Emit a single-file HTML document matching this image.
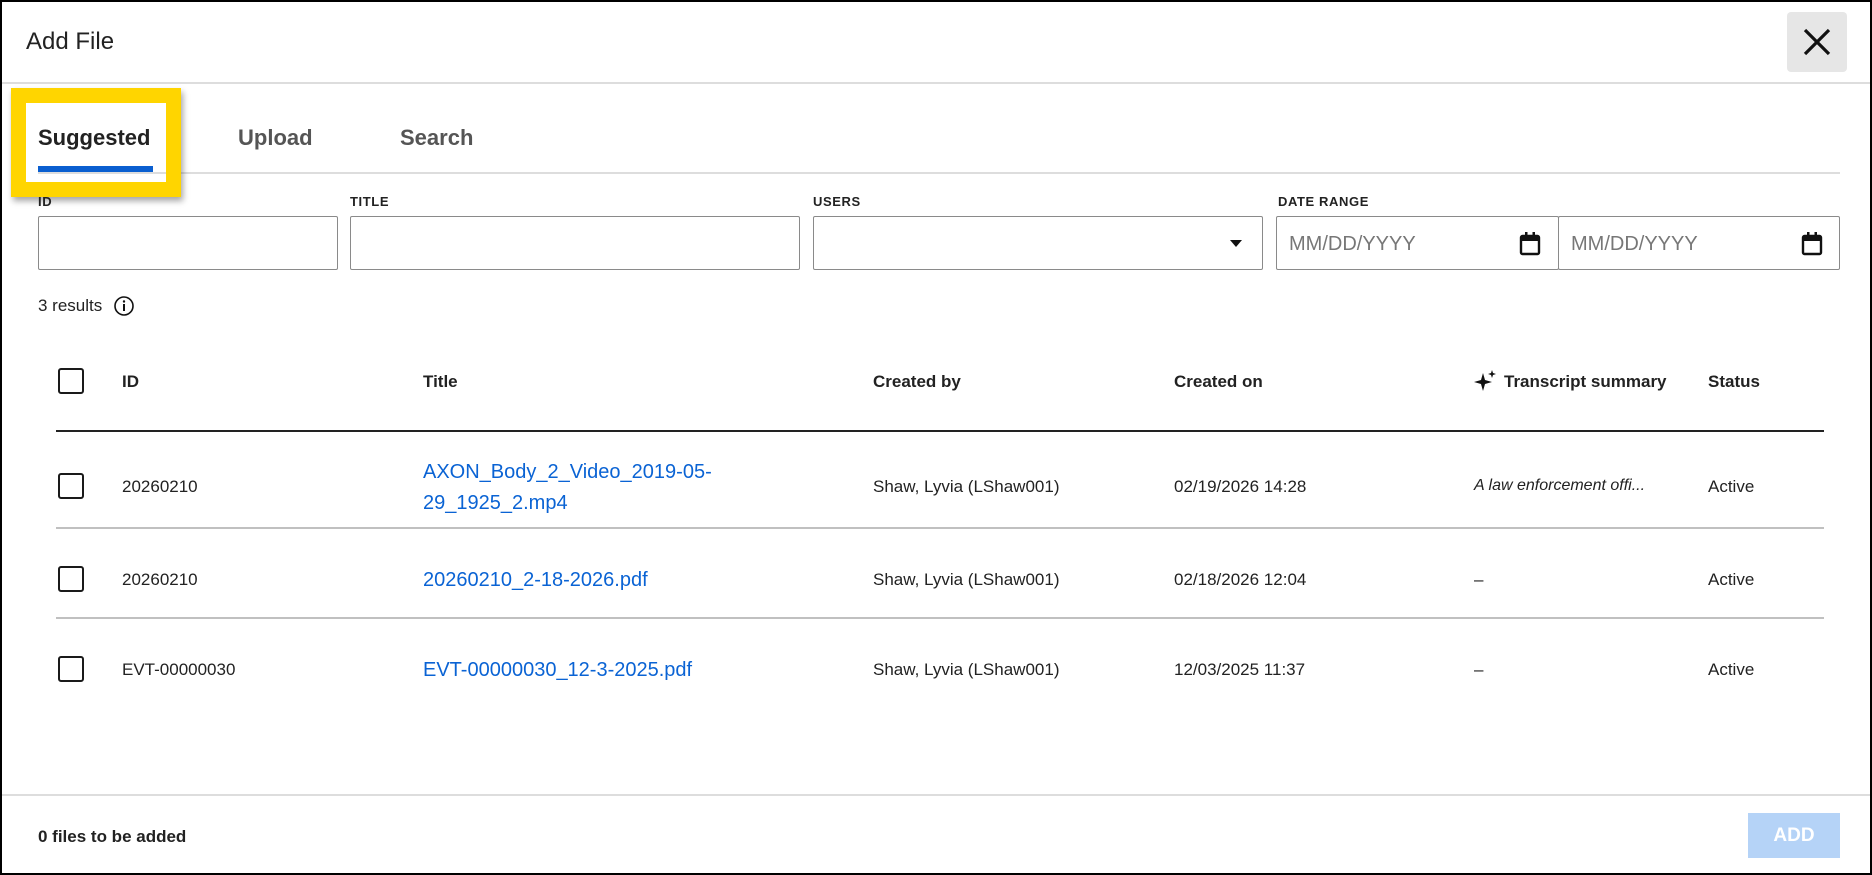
<!DOCTYPE html>
<html><head><meta charset="utf-8"><style>
*{box-sizing:border-box;margin:0;padding:0}
body{width:1872px;height:875px;background:#fff;font-family:"Liberation Sans",sans-serif;color:#1a1a1a;position:relative;overflow:hidden}
.frame{position:absolute;left:0;top:0;width:1872px;height:875px;border:2px solid #000}
.a{position:absolute;white-space:nowrap}
.lbl{font-size:13px;font-weight:bold;letter-spacing:.6px;color:#222}
.inp{position:absolute;top:216px;height:54px;border:1.5px solid #8a8a8a;border-radius:2px;background:#fff}
.cb{position:absolute;left:58px;width:26px;height:26px;border:2.5px solid #1a1a1a;border-radius:3px}
.t{font-size:17px;color:#222}
.lnk{font-size:20px;color:#0a63d4}
.hd{font-size:17px;font-weight:bold;color:#222}
</style></head><body>
<div class="frame"></div>
<div class="a" style="left:26px;top:28px;font-size:24px;color:#222">Add File</div>
<div class="a" style="left:1787px;top:12px;width:60px;height:60px;background:#e6e6e6;border-radius:4px">
<svg width="60" height="60" viewBox="0 0 60 60"><path d="M18 18L42 42M42 18L18 42" stroke="#111" stroke-width="3.2"/></svg></div>
<div class="a" style="left:2px;top:82px;width:1868px;height:1.5px;background:#ddd"></div>
<div class="a" style="left:38px;top:172px;width:1802px;height:1.5px;background:#ddd"></div>
<div class="a" style="left:11px;top:88px;width:170px;height:109px;border:15px solid #FFD500;box-shadow:2px 4px 6px rgba(0,0,0,.35);background:transparent"></div>
<div class="a" style="left:38px;top:125px;font-size:22px;font-weight:bold;color:#222">Suggested</div>
<div class="a" style="left:38px;top:166px;width:115px;height:6px;background:#0a5fd0"></div>
<div class="a" style="left:238px;top:125px;font-size:22px;font-weight:bold;color:#555">Upload</div>
<div class="a" style="left:400px;top:125px;font-size:22px;font-weight:bold;color:#555">Search</div>
<div class="a lbl" style="left:38px;top:194px">ID</div>
<div class="a lbl" style="left:350px;top:194px">TITLE</div>
<div class="a lbl" style="left:813px;top:194px">USERS</div>
<div class="a lbl" style="left:1278px;top:194px">DATE RANGE</div>
<div class="inp" style="left:38px;width:300px"></div>
<div class="inp" style="left:350px;width:450px"></div>
<div class="inp" style="left:813px;width:450px"><svg style="position:absolute;left:415px;top:22px" width="14" height="10"><path d="M1 1h12L7 8z" fill="#111"/></svg></div>
<div class="inp" style="left:1276px;width:283px;border-right-width:1px"><span class="a" style="left:12px;top:16px;font-size:20px;color:#777">MM/DD/YYYY</span>
<svg style="position:absolute;left:241px;top:14px" width="24" height="26" viewBox="0 0 24 26"><rect x="3" y="5" width="18" height="18" rx="1.5" fill="none" stroke="#111" stroke-width="2.4"/><rect x="3" y="5" width="18" height="5" fill="#111"/><rect x="7" y="1" width="2.5" height="5" fill="#111"/><rect x="14.5" y="1" width="2.5" height="5" fill="#111"/></svg></div>
<div class="inp" style="left:1558px;width:282px;border-left-width:1px"><span class="a" style="left:12px;top:16px;font-size:20px;color:#777">MM/DD/YYYY</span>
<svg style="position:absolute;left:241px;top:14px" width="24" height="26" viewBox="0 0 24 26"><rect x="3" y="5" width="18" height="18" rx="1.5" fill="none" stroke="#111" stroke-width="2.4"/><rect x="3" y="5" width="18" height="5" fill="#111"/><rect x="7" y="1" width="2.5" height="5" fill="#111"/><rect x="14.5" y="1" width="2.5" height="5" fill="#111"/></svg></div>
<div class="a t" style="left:38px;top:296px">3 results</div>
<svg class="a" style="left:113px;top:295px" width="22" height="22" viewBox="0 0 22 22"><circle cx="11" cy="11" r="9" fill="none" stroke="#111" stroke-width="1.6"/><rect x="10" y="9" width="2" height="7" fill="#111"/><circle cx="11" cy="6.5" r="1.2" fill="#111"/></svg>
<div class="cb" style="top:368px"></div>
<div class="a hd" style="left:122px;top:372px">ID</div>
<div class="a hd" style="left:423px;top:372px">Title</div>
<div class="a hd" style="left:873px;top:372px">Created by</div>
<div class="a hd" style="left:1174px;top:372px">Created on</div>
<svg class="a" style="left:1474px;top:370px" width="24" height="22" viewBox="0 0 24 22"><path d="M9 3 L11 10 L18 12 L11 14 L9 21 L7 14 L0 12 L7 10Z" fill="#111"/><path d="M18 0 L19 3 L22 4 L19 5 L18 8 L17 5 L14 4 L17 3Z" fill="#111"/></svg>
<div class="a hd" style="left:1504px;top:372px">Transcript summary</div>
<div class="a hd" style="left:1708px;top:372px">Status</div>
<div class="a" style="left:56px;top:430px;width:1768px;height:2px;background:#222"></div>
<div class="cb" style="top:473px"></div>
<div class="a t" style="left:122px;top:477px">20260210</div>
<div class="a lnk" style="left:423px;top:461px">AXON_Body_2_Video_2019-05-</div>
<div class="a lnk" style="left:423px;top:492px">29_1925_2.mp4</div>
<div class="a t" style="left:873px;top:477px">Shaw, Lyvia (LShaw001)</div>
<div class="a t" style="left:1174px;top:477px">02/19/2026 14:28</div>
<div class="a t" style="left:1474px;top:477px;font-style:italic;font-size:16px">A law enforcement offi...</div>
<div class="a t" style="left:1708px;top:477px">Active</div>
<div class="a" style="left:56px;top:527px;width:1768px;height:2px;background:#c0c0c0"></div>
<div class="cb" style="top:566px"></div>
<div class="a t" style="left:122px;top:570px">20260210</div>
<div class="a lnk" style="left:423px;top:569px">20260210_2-18-2026.pdf</div>
<div class="a t" style="left:873px;top:570px">Shaw, Lyvia (LShaw001)</div>
<div class="a t" style="left:1174px;top:570px">02/18/2026 12:04</div>
<div class="a t" style="left:1474px;top:570px">–</div>
<div class="a t" style="left:1708px;top:570px">Active</div>
<div class="a" style="left:56px;top:617px;width:1768px;height:2px;background:#c0c0c0"></div>
<div class="cb" style="top:656px"></div>
<div class="a t" style="left:122px;top:660px">EVT-00000030</div>
<div class="a lnk" style="left:423px;top:659px">EVT-00000030_12-3-2025.pdf</div>
<div class="a t" style="left:873px;top:660px">Shaw, Lyvia (LShaw001)</div>
<div class="a t" style="left:1174px;top:660px">12/03/2025 11:37</div>
<div class="a t" style="left:1474px;top:660px">–</div>
<div class="a t" style="left:1708px;top:660px">Active</div>
<div class="a" style="left:2px;top:794px;width:1868px;height:1.5px;background:#ddd"></div>
<div class="a" style="left:38px;top:827px;font-size:17px;font-weight:bold;color:#222">0 files to be added</div>
<div class="a" style="left:1748px;top:813px;width:92px;height:45px;background:#b5d3f7;color:#fff;font-weight:bold;font-size:19px;text-align:center;line-height:45px">ADD</div>
</body></html>
